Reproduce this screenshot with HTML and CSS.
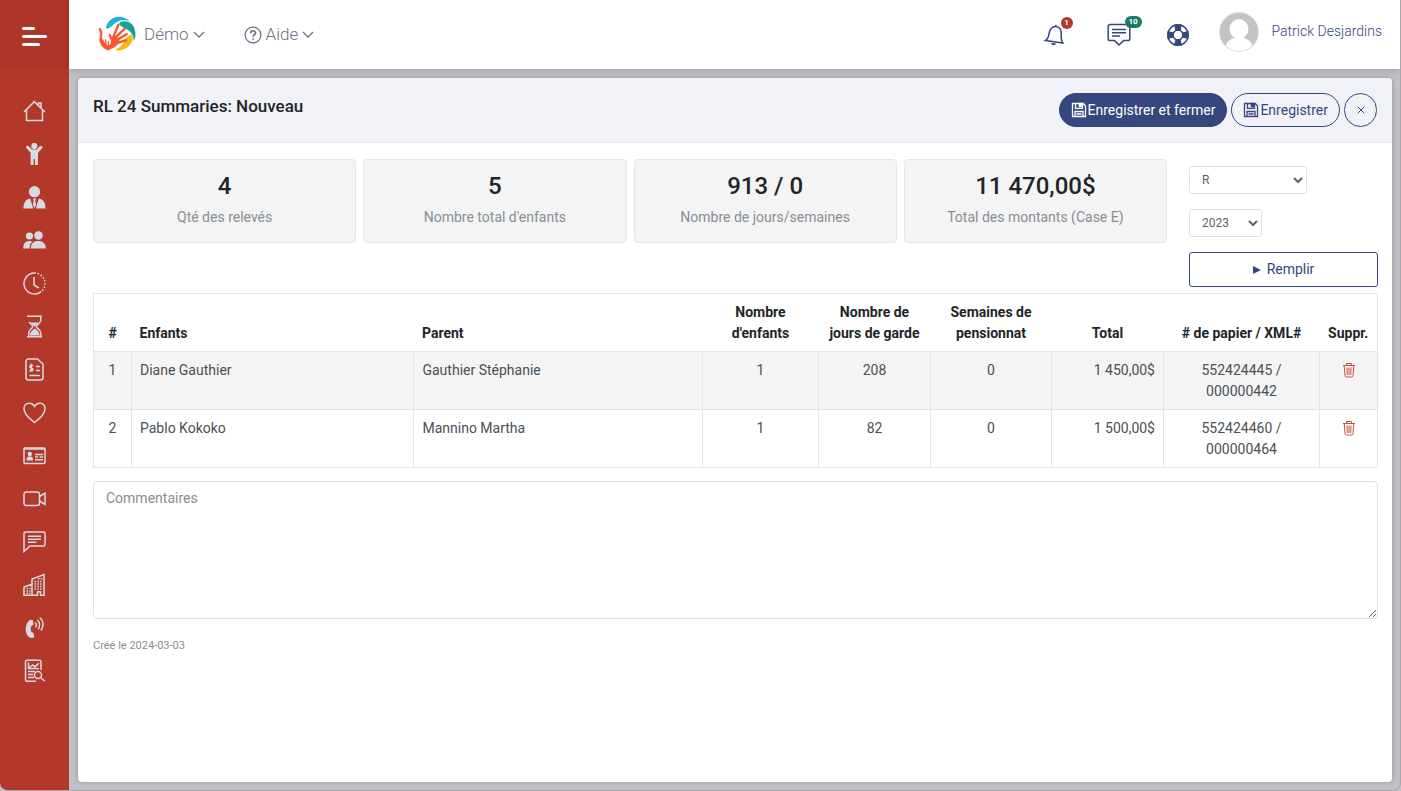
FILE: index.html
```html
<!DOCTYPE html>
<html lang="fr">
<head>
  <meta charset="UTF-8">
  <meta name="viewport" content="width=device-width, initial-scale=1.0">
  <title>RL 24 Summaries</title>
  <link rel="stylesheet" href="styles.css">
</head>
<body>
  <div class="app">
    <aside class="sidebar">
      <button type="button" class="menu-toggle" aria-label="Menu">
        <span class="bar bar-short"></span>
        <span class="bar"></span>
        <span class="bar bar-medium"></span>
      </button>
      <nav class="side-nav">
        <a href="#" aria-label="Accueil">
          <svg class="icon" viewBox="0 0 23 23"><path d="M1 12 11.3 1.6 22 12M3.5 10v10.5h16V10M15.500 5.300V3h2.500v5"/></svg>
        </a>
        <a href="#" aria-label="Enfants">
          <svg class="icon solid" viewBox="0 0 23 23"><circle cx="11.300" cy="3" r="3.100"/><path d="M3.500 3.200c.8-.8 1.700-.6 2.300 0L9 6.600h4.700l3.200-3.400c.8-.8 1.500-.7 2.200 0 .6.700.5 1.500 0 2l-4.100 4.600V22H12v-6h-1.300v6H7.600V9.800L3.500 5.200c-.5-.7-.6-1.400 0-2Z"/></svg>
        </a>
        <a href="#" aria-label="Employés">
          <svg class="icon solid" viewBox="0 0 23 23"><circle cx="11.500" cy="5.700" r="5.600"/><path d="M.4 22.500c.2-6 2.200-9.300 6.800-10l3 10ZM22.600 22.500c-.2-6-2.200-9.300-6.800-10l-3 10ZM10 12.500h3l-.7 2.300.8 4.200-1.600 3-1.600-3 .8-4.200Z"/></svg>
        </a>
        <a href="#" aria-label="Parents">
          <svg class="icon solid" viewBox="0 0 23 23"><circle cx="6.500" cy="7" r="3.600"/><path d="M.3 19.500c0-5 2-7.400 6.200-7.400 1.200 0 2 .2 2.900.7-2 1.600-2.800 3.800-2.900 6.700Z"/><circle cx="15.500" cy="6.500" r="4.300"/><path d="M7.800 19.500c0-5 2.600-7.600 7.400-7.600s7.600 2.600 7.600 7.600Z"/></svg>
        </a>
        <a href="#" aria-label="Horaire">
          <svg class="icon" viewBox="0 0 23 23"><path d="M11.500 1a10.500 10.500 0 1 0 6.700 18.600M11 5v8l5 3"/><path stroke-dasharray="1.500 1.700" d="M11.500 1a10.500 10.500 0 0 1 6.700 18.600"/></svg>
        </a>
        <a href="#" aria-label="Attente">
          <svg class="icon" viewBox="0 0 23 23"><path d="M4 1.300h15M4 21.700h15M17.800 1.500v3.800c0 3-4.500 4.200-4.500 6.200s4.500 3.200 4.500 6.200v4M5.700 21.500v-3.800c0-3 4-4.200 4-6.200 0-1.600-2.700-2.700-3.700-4.500"/><path class="fill" d="M7.300 7.500h8.400l-4 4.200ZM6.800 20.500c0-3.500 3-5.300 4.900-7 2 1.700 5 3.500 5 7Z"/></svg>
        </a>
        <a href="#" aria-label="Facturation">
          <svg class="icon" viewBox="0 0 23 23"><path d="M5.500 1h9l5.500 5v13.500a2.500 2.500 0 0 1-2.500 2.500H5.500A2.500 2.500 0 0 1 3 19.500V3.500A2.500 2.500 0 0 1 5.500 1M13 8.500h4M13 12.500h4M6.500 17.500H17M10 7.500c-3-1-4.500 1.500-1.700 2.500s1.700 4-1.800 2.500M8.300 5.800v8"/></svg>
        </a>
        <a href="#" aria-label="Santé">
          <svg class="icon" viewBox="0 0 23 23"><path d="M11.500 21.500C6 17.500 1 13 1 7.500 1 2 8.500 0 11.500 5.500 14.500 0 22 2 22 7.500c0 5.500-5 10-10.500 14Z"/></svg>
        </a>
        <a href="#" aria-label="Fiches">
          <svg class="icon" viewBox="0 0 23 23"><rect x="1" y="4" width="21" height="15.500" rx="1"/><path d="M1 5h21M12 10.500h8M12 13h3M16.500 13H20M12 15.800h8"/><circle class="fill" cx="6.800" cy="10" r="2.200"/><path class="fill" d="M3.500 16.500c0-3.500 1-4 3.300-4s3.300.5 3.300 4Z"/></svg>
        </a>
        <a href="#" aria-label="Vidéo">
          <svg class="icon" viewBox="0 0 23 23"><rect x="1" y="5" width="15.500" height="13.500" rx="2.500"/><path d="m16.500 9.500 5.500-3.500v11.500l-5.500-3.500"/></svg>
        </a>
        <a href="#" aria-label="Messages">
          <svg class="icon" viewBox="0 0 23 23"><path d="M2.500 2h18A1.500 1.500 0 0 1 22 3.500v11a1.500 1.500 0 0 1-1.500 1.500H7l-6 5.500v-18A1.500 1.500 0 0 1 2.500 2ZM5 6.300h13M5 9.300h13M5 12.300h8.500"/></svg>
        </a>
        <a href="#" aria-label="Installations">
          <svg class="icon" viewBox="0 0 23 23"><path d="M1 22.300V14l8-3v11.300ZM9 22.300V6l12-4.500v20.800h-3.500v-3.500h-3v3.500Z"/><path stroke-dasharray="1.600 1.200" d="M3.500 15.500h4M3.500 18h4M3.500 20.300h4M11.500 8.500h8M11.500 11h8M11.500 13.500h8M11.500 16h8M15 5.800h4.500"/></svg>
        </a>
        <a href="#" aria-label="Appels">
          <svg class="icon" viewBox="0 0 23 23"><path class="fill" d="M7.500 4c1.500-.5 2.200 0 2.500 1l.4 2.700c0 1-.5 1.500-1.700 1.700-1.400 2-1.300 5.200.1 7.200 1-.1 1.700.3 1.900 1.200l.5 2.500c0 1-.5 1.500-2 1.700C1.500 22.500.5 6.500 7.500 4Z"/><path d="M12 6.500c1.500 1.200 1.600 3.200.5 4.800M14.300 4c2.800 2.200 3 6.200.9 9.200M16.700 1.500c4.200 3.500 4.300 9 1.300 13"/></svg>
        </a>
        <a href="#" aria-label="Rapports">
          <svg class="icon" viewBox="0 0 23 23"><path d="M13 22.300H4a1.500 1.500 0 0 1-1.500-1.500v-18A1.500 1.500 0 0 1 4 1.300h12.500A1.500 1.500 0 0 1 18 2.800V11M5.500 3.500v6H16M6.500 8.500 9.500 6l2.200 1.700L16 4.300M5 12.500h7M5 15.500h5M5 18.500h6"/><circle cx="15" cy="16" r="3.500"/><path d="m17.500 18.500 4 3.500"/></svg>
        </a>
      </nav>
    </aside>

    <div class="main">
      <header class="topbar">
        <a href="#" class="logo" aria-label="Accueil">
          <svg viewBox="0 0 40 40">
            <path class="logo-blue" d="M8 14C9 5 18 0 26 2.500c3 .8 5 2 6 4C25 3 19 7 14 11.500c-2 1.800-4.500 2.500-6 2.500Z"/>
            <path class="logo-teal" d="M23.500 7c6-2 12 .8 14 7 1.500 5 1.500 9-1 13 .5-5-1.800-8.500-5-11-3-2.500-7-3.500-9-5.500-1.200-1.200-.6-2.900 1-3.500Z"/>
            <path class="logo-yellow" d="M35 20c2.500 6-2 13-9 15.500-3.500 1.200-6.500 1-8.500.2 4-1.700 7.500-4 9-7.700 1.500-3.500 4.500-7.500 8.500-8Z"/>
            <path class="logo-hand" d="m15 24 6-14M17 24l10.500-10M19 26l10.500-6.500M20 28.500l9-2.700M15 27l-3-6.500"/>
            <path class="logo-palm" d="m13.500 25 4-4 4.500 3.500-.5 4.500-4.500 4-7 3.500-3-4 6-2.500Z"/>
            <path class="logo-palm" d="M.7 14.500c.6-1.700 2.200-1.500 2.700 0 1.200 3 1.300 6.500.6 9.500l4.500 6.500 3 3-1.500 3C5 34 3.500 32 1.500 27c-.6-2.300 1.200-5 .7-8C2 17 .9 16 .7 14.500Z"/>
            <path class="logo-finger" d="M6.500 31.500 4.800 26M8.500 31.500l-.8-6M10.500 32l.3-5M12 33l2-4"/>
          </svg>
        </a>
        <button type="button" class="top-link">
          Démo
          <svg class="chevron" viewBox="0 0 12 8"><path d="m1 1 5 5 5-5"/></svg>
        </button>
        <button type="button" class="top-link help">
          <svg class="help-icon" viewBox="0 0 18 18"><circle cx="9" cy="9" r="7.900"/><path class="mark" d="M6.700 7.200C6.700 4 11.500 4 11.500 7c0 1.800-2.400 1.700-2.400 3.800M9.100 12.200v1.500"/></svg>
          Aide
          <svg class="chevron" viewBox="0 0 12 8"><path d="m1 1 5 5 5-5"/></svg>
        </button>

        <div class="top-actions">
          <button type="button" class="top-icon" aria-label="Notifications">
            <svg viewBox="0 0 24 24"><path d="M2.500 17.500c2-1.200 3-3.500 3.600-7C6.800 6.500 9 3.500 12.800 3.600c4 .2 5.700 3.200 5.400 7.400-.2 3.500-.1 6.500 1.600 9ZM12.800 3.600V1.800"/><path class="fill" d="m8 20 5 .6c-.5 2.400-4.500 2.200-5-.6Z"/></svg>
            <span class="badge badge-red">1</span>
          </button>
          <button type="button" class="top-icon messages" aria-label="Messages">
            <svg viewBox="0 0 24 24"><path d="M3 1.500h18A1.800 1.800 0 0 1 22.800 3.300v12.500a1.800 1.800 0 0 1-1.800 1.800h-4.500L12 22l-4.500-4.400H3a1.800 1.800 0 0 1-1.800-1.800V3.300A1.800 1.800 0 0 1 3 1.500ZM5 6.500h14M5 9.700h14M5 13h8"/></svg>
            <span class="badge badge-green">10</span>
          </button>
          <button type="button" class="top-icon support" aria-label="Soutien">
            <svg viewBox="0 0 24 24"><circle cx="12" cy="12" r="10.200"/><circle cx="12" cy="12" r="5"/><path class="fill" d="M8 1.500h8l-1.500 6.500h-5ZM8 22.500h8l-1.500-6.500h-5ZM1.500 8v8l6.500-1.500v-5ZM22.500 8v8l-6.500-1.500v-5Z"/></svg>
          </button>
          <a href="#" class="user">
            <svg class="avatar" viewBox="0 0 40 40">
              <clipPath id="avatarClip"><circle cx="20" cy="20" r="19.500"/></clipPath>
              <circle class="avatar-bg" cx="20" cy="20" r="19.500"/>
              <g class="avatar-person" clip-path="url(#avatarClip)"><ellipse cx="20" cy="17" rx="9.500" ry="10"/><path d="M6 40c0-8 3-12.500 9-14h10c6 1.500 9 6 9 14Z"/></g>
              <circle class="avatar-ring" cx="20" cy="20" r="19.500"/>
            </svg>
            <span>Patrick Desjardins</span>
          </a>
        </div>
      </header>

      <main class="content">
        <form class="card">
          <div class="card-header">
            <h1>RL 24 Summaries: Nouveau</h1>
            <div class="card-actions">
              <button type="submit" class="btn btn-primary">
                <svg class="save" viewBox="0 0 16 16"><path d="M1.500 1.500h10.700l2.300 2.300v10.700h-13ZM4.500 1.500v4.800h7V1.500M4 14.500V9.500h8v5M5.500 12h5"/><path class="fill" d="M8.300 1.500h2v3.200h-2Z"/></svg>
                Enregistrer et fermer
              </button>
              <button type="button" class="btn">
                <svg class="save" viewBox="0 0 16 16"><path d="M1.500 1.500h10.700l2.300 2.300v10.700h-13ZM4.500 1.500v4.800h7V1.500M4 14.500V9.500h8v5M5.500 12h5"/><path class="fill" d="M8.300 1.500h2v3.200h-2Z"/></svg>
                Enregistrer
              </button>
              <button type="button" class="btn btn-close" aria-label="Fermer">
                <svg viewBox="0 0 8 8"><path d="m.7.7 6.600 6.600M7.300.7.700 7.300"/></svg>
              </button>
            </div>
          </div>

          <div class="card-body">
            <div class="summary">
              <div class="stats">
                <div class="stat"><strong>4</strong><span>Qté des relevés</span></div>
                <div class="stat"><strong>5</strong><span>Nombre total d'enfants</span></div>
                <div class="stat"><strong>913 / 0</strong><span>Nombre de jours/semaines</span></div>
                <div class="stat"><strong>11 470,00$</strong><span>Total des montants (Case E)</span></div>
              </div>
              <div class="filters">
                <select class="select-type" aria-label="Type">
                  <option>R</option>
                </select>
                <select class="select-year" aria-label="Année">
                  <option>2023</option>
                </select>
                <button type="button" class="btn-fill">
                  <svg viewBox="0 0 8 8"><path d="M0 0 8 4 0 8Z"/></svg>
                  Remplir
                </button>
              </div>
            </div>

            <table class="releves">
              <colgroup>
                <col class="col-num">
                <col class="col-child">
                <col>
                <col class="col-children">
                <col class="col-days">
                <col class="col-weeks">
                <col class="col-total">
                <col class="col-paper">
                <col class="col-delete">
              </colgroup>
              <thead>
                <tr>
                  <th>#</th>
                  <th class="left">Enfants</th>
                  <th class="left">Parent</th>
                  <th>Nombre d'enfants</th>
                  <th>Nombre de jours de garde</th>
                  <th>Semaines de pensionnat</th>
                  <th>Total</th>
                  <th># de papier / XML#</th>
                  <th>Suppr.</th>
                </tr>
              </thead>
              <tbody>
                <tr>
                  <td>1</td>
                  <td class="left">Diane Gauthier</td>
                  <td class="left">Gauthier Stéphanie</td>
                  <td>1</td>
                  <td>208</td>
                  <td>0</td>
                  <td class="right">1 450,00$</td>
                  <td>552424445 /<br>000000442</td>
                  <td>
                    <button type="button" class="delete" aria-label="Supprimer">
                      <svg viewBox="0 0 14 16"><path d="M1 3.500h12M4.500 3.300V1.500h5v1.800M2.200 3.800 3 13.500a1.500 1.500 0 0 0 1.500 1.500h5a1.500 1.500 0 0 0 1.500-1.500l.8-9.700M5 5.500l.3 7.500M7 5.500V13M9 5.500 8.700 13"/></svg>
                    </button>
                  </td>
                </tr>
                <tr>
                  <td>2</td>
                  <td class="left">Pablo Kokoko</td>
                  <td class="left">Mannino Martha</td>
                  <td>1</td>
                  <td>82</td>
                  <td>0</td>
                  <td class="right">1 500,00$</td>
                  <td>552424460 /<br>000000464</td>
                  <td>
                    <button type="button" class="delete" aria-label="Supprimer">
                      <svg viewBox="0 0 14 16"><path d="M1 3.500h12M4.500 3.300V1.500h5v1.800M2.200 3.800 3 13.500a1.500 1.500 0 0 0 1.500 1.500h5a1.500 1.500 0 0 0 1.500-1.500l.8-9.700M5 5.500l.3 7.500M7 5.500V13M9 5.500 8.700 13"/></svg>
                    </button>
                  </td>
                </tr>
              </tbody>
            </table>

            <textarea class="comments" name="comments" placeholder="Commentaires" aria-label="Commentaires"></textarea>
            <p class="created">Créé le 2024-03-03</p>
          </div>
        </form>
      </main>
    </div>
  </div>
</body>
</html>
```
FILE: styles.css
```css
* {
  box-sizing: border-box;
  margin: 0;
  padding: 0;
}

body {
  font-family: Roboto, "Liberation Sans", sans-serif;
  font-size: 14px;
  line-height: 21px;
  color: #495057;
  background: #c0c1c5;
}

button,
select,
textarea {
  font: inherit;
}

button {
  border: none;
  background: none;
  cursor: pointer;
}

a {
  text-decoration: none;
}

svg {
  display: block;
  fill: none;
}

.app {
  display: flex;
  min-height: 100vh;
  border-right: 1px solid #a9a9ac;
  border-bottom: 1px solid #a9a9ac;
  border-radius: 0 0 8px 8px;
  overflow: hidden;
}

/* Sidebar */
.sidebar {
  flex: none;
  width: 69px;
  background: #b43829;
}

.menu-toggle {
  display: flex;
  flex-direction: column;
  justify-content: center;
  gap: 5px;
  width: 100%;
  height: 69px;
  padding: 3px 22px 0;
  background: #ae3628;
}

.bar {
  width: 25px;
  height: 3px;
  border-radius: 2px;
  background: #fff;
}

.bar-short {
  width: 13px;
}

.bar-medium {
  width: 18px;
}

.side-nav {
  display: flex;
  flex-direction: column;
  align-items: center;
  gap: 20px;
  padding-top: 31px;
}

.icon {
  width: 23px;
  height: 23px;
  stroke: #d3dbe3;
  stroke-width: 1.5;
}

.icon.solid,
.icon .fill {
  fill: #d3dbe3;
  stroke: none;
}

/* Top bar */
.main {
  flex: 1;
  display: flex;
  flex-direction: column;
  min-width: 0;
}

.topbar {
  display: flex;
  align-items: center;
  height: 69px;
  padding: 0 18px 0 29px;
  background: #fff;
  box-shadow: 0 2px 6px rgba(0, 0, 0, 0.15);
}

.logo {
  margin-right: 7px;
}

.logo svg {
  width: 39px;
  height: 39px;
}

.logo-blue {
  fill: #22b0d8;
}

.logo-teal {
  fill: #0fa596;
}

.logo-yellow {
  fill: #f8b90f;
}

.logo-palm {
  fill: #fb5630;
}

.logo-hand,
.logo-finger {
  stroke: #fb5630;
  stroke-width: 2.4;
  stroke-linecap: round;
}

.logo-finger {
  stroke-width: 1.4;
}

.top-link {
  display: flex;
  align-items: center;
  gap: 4px;
  font-size: 17px;
  font-weight: 300;
  color: #6c7185;
}

.help {
  margin-left: 39px;
}

.help-icon {
  width: 18px;
  height: 18px;
  stroke: #6c7185;
  stroke-width: 1.3;
}

.help-icon .mark {
  stroke-width: 1.7;
}

.chevron {
  width: 12px;
  height: 8px;
  stroke: #6c7185;
  stroke-width: 1.3;
}

.top-actions {
  display: flex;
  align-items: center;
  margin-left: auto;
}

.top-icon {
  position: relative;
}

.top-icon svg {
  width: 24px;
  height: 24px;
  stroke: #35477d;
  stroke-width: 1.5;
}

.top-icon .fill {
  fill: #35477d;
  stroke: none;
}

.messages {
  margin-left: 40px;
}

.support {
  margin-left: 35px;
}

.badge {
  position: absolute;
  top: -6px;
  left: 18px;
  min-width: 12px;
  height: 12px;
  border-radius: 6px;
  font-size: 8px;
  font-weight: 700;
  line-height: 12px;
  text-align: center;
  color: #fff;
}

.badge-red {
  background: #b43829;
}

.badge-green {
  top: -7px;
  min-width: 17px;
  background: #1c7a6b;
}

.user {
  display: flex;
  align-items: center;
  gap: 13px;
  margin-left: 29px;
  padding-bottom: 6px;
  font-size: 14px;
  font-weight: 300;
  color: #35477d;
}

.avatar {
  width: 40px;
  height: 40px;
}

.avatar-bg {
  fill: #c3c3c3;
}

.avatar-person {
  fill: #fff;
}

.avatar-ring {
  stroke: #dcdcdc;
}

/* Card */
.content {
  flex: 1;
  display: flex;
  padding: 9px 8px 8px 9px;
}

.card {
  flex: 1;
  min-width: 0;
  border-radius: 4px;
  background: #fff;
  box-shadow: 0 0 4px rgba(0, 0, 0, 0.25);
}

.card-header {
  display: flex;
  justify-content: space-between;
  align-items: flex-start;
  padding: 15px 15px 15px;
  border-bottom: 1px solid #e6e8ec;
  border-radius: 4px 4px 0 0;
  background: #f1f2f8;
}

h1 {
  font-size: 17px;
  font-weight: 500;
  line-height: 26px;
  color: #212529;
}

.card-actions {
  display: flex;
  gap: 4px;
}

.btn {
  display: flex;
  align-items: center;
  justify-content: center;
  gap: 1px;
  height: 34px;
  padding: 0 11px;
  border: 1px solid #35477d;
  border-radius: 17px;
  color: #35477d;
}

.btn-primary {
  background: #35477d;
  color: #fff;
}

.btn-close {
  width: 33px;
  padding: 0;
}

.btn svg {
  width: 8px;
  height: 8px;
  stroke: currentColor;
}

.btn .save {
  width: 16px;
  height: 16px;
  stroke-width: 1.3;
}

.btn .fill {
  fill: currentColor;
}

.card-body {
  padding: 16px 14px 15px 15px;
}

.summary {
  display: flex;
  gap: 22px;
  margin-bottom: 6px;
}

.stats {
  flex: 1;
  display: grid;
  grid-template-columns: repeat(4, 1fr);
  gap: 7px;
  align-items: start;
}

.stat {
  display: flex;
  flex-direction: column;
  height: 84px;
  padding: 12px;
  border: 1px solid #e4e6e9;
  border-radius: 4px;
  background: #f4f4f4;
  text-align: center;
}

.stat strong {
  margin-bottom: 7px;
  font-size: 24px;
  font-weight: 500;
  line-height: 28px;
  color: #212529;
}

.stat span {
  color: #868e96;
}

.filters {
  display: flex;
  flex-direction: column;
  align-items: flex-start;
  gap: 15px;
  width: 189px;
  padding-top: 7px;
}

.filters select {
  height: 28px;
  padding: 0 8px;
  border: 1px solid #dee2e6;
  border-radius: 3px;
  background: #fff;
  font-size: 12px;
  color: #5c636a;
}

.select-type {
  width: 118px;
}

.select-year {
  width: 73px;
}

.btn-fill {
  display: flex;
  align-items: center;
  justify-content: center;
  gap: 6px;
  width: 100%;
  height: 35px;
  border: 1px solid #35477d;
  border-radius: 3px;
  color: #35477d;
}

.btn-fill svg {
  width: 8px;
  height: 8px;
  fill: #35477d;
}

/* Table */
.releves {
  width: 100%;
  margin-bottom: 13px;
  border: 1px solid #e2e5e9;
  border-collapse: collapse;
  table-layout: fixed;
}

.col-num {
  width: 38px;
}

.col-child {
  width: 22%;
}

.col-children {
  width: 116px;
}

.col-days,
.col-total {
  width: 112px;
}

.col-weeks {
  width: 121px;
}

.col-paper {
  width: 156px;
}

.col-delete {
  width: 58px;
}

.releves th,
.releves td {
  padding: 8px 8px 7px;
  text-align: center;
  vertical-align: top;
}

.releves th {
  font-weight: 700;
  vertical-align: bottom;
  color: #212529;
}

.releves td {
  border: 1px solid #e2e5e9;
}

.releves .left {
  text-align: left;
}

.releves .right {
  text-align: right;
}

.releves tbody tr:nth-child(odd) {
  background: #f4f4f4;
}

.delete {
  display: inline-block;
  padding-top: 2px;
  vertical-align: top;
}

.delete svg {
  width: 14px;
  height: 16px;
  stroke: #c9503f;
}

.comments {
  display: block;
  width: 100%;
  height: 138px;
  padding: 6px 12px;
  border: 1px solid #dee2e6;
  border-radius: 4px;
  background: #fff;
  color: #495057;
  resize: vertical;
}

.comments::placeholder {
  color: #868e96;
}

.created {
  margin-top: 16px;
  font-size: 11px;
  color: #868e96;
}
```
